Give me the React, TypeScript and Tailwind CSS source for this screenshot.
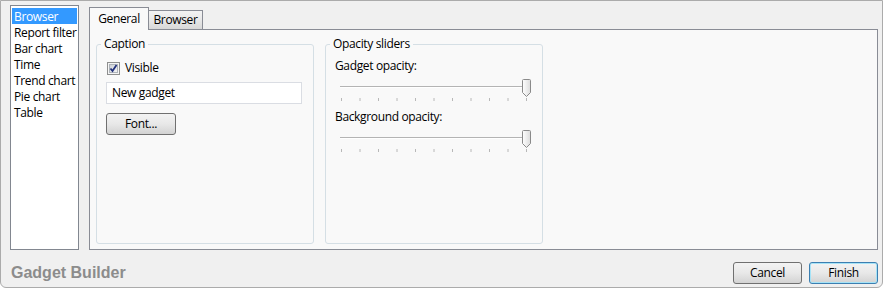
import React from "react";

const ticks = [0, 1, 2, 3, 4, 5, 6, 7, 8, 9, 10];

function Slider() {
  return (
    <div className="relative w-[197px] h-[28px]">
      <div className="absolute left-[5px] top-[12px] w-[188px] h-[2px] border-t border-[#b4b4b4] bg-white" />
      <svg className="absolute left-0 top-[24px]" width="197" height="4">
        {ticks.map((i) => (
          <line key={i} x1={6.5 + i * 18.5} x2={6.5 + i * 18.5} y1="0" y2="3" stroke="#b8b8b8" strokeWidth="1" />
        ))}
      </svg>
      <svg className="absolute left-[186px] top-[5px]" width="11" height="19" viewBox="0 0 11 19">
        <defs>
          <linearGradient id="thumbg" x1="0" y1="0" x2="1" y2="0">
            <stop offset="0" stopColor="#ffffff" />
            <stop offset="1" stopColor="#dcdcdc" />
          </linearGradient>
        </defs>
        <path d="M1.5 1.5 Q1.5 0.5 2.5 0.5 H8.5 Q9.5 0.5 9.5 1.5 V13.5 L5.5 17.5 L1.5 13.5 Z" fill="url(#thumbg)" stroke="#8a8a8a" strokeWidth="1" />
      </svg>
    </div>
  );
}

export default function App() {
  const items = ["Browser", "Report filter", "Bar chart", "Time", "Trend chart", "Pie chart", "Table"];
  return (
    <div
      className="w-[885px] h-[290px] bg-white text-[12px] tracking-[-0.35px] text-black"
      style={{ fontFamily: '"Open Sans", "Noto Sans", sans-serif' }}
    >
      <div className="w-[883px] h-[288px] bg-[#f0f0f0] border border-[#ababab] rounded-b-[6px] flex flex-col pl-[9px] pr-[4px] pt-[4px]">
        <div className="flex h-[245px]">
          <div className="w-[69px] h-full bg-white border border-[#828790] p-px pt-[2px] flex flex-col">
            {items.map((it, i) => (
              <div
                key={it}
                className={
                  "h-[16px] leading-[17px] pl-[2px] whitespace-nowrap " +
                  (i === 0 ? "bg-[#3399ff] text-white" : "")
                }
              >
                {it}
              </div>
            ))}
          </div>
          <div className="ml-[10px] flex-1 flex flex-col">
            <div className="h-[24px] flex items-end">
              <div className="relative z-10 -mb-px w-[60px] h-[23px] bg-[#f9f9f9] border border-b-0 border-[#898c95] flex items-center justify-center pb-[1px]">
                General
              </div>
              <div className="-ml-px w-[55px] h-[19px] bg-linear-to-b from-[#f3f3f3] via-[#e8e8e8] to-[#d8d8d8] border border-b-0 border-[#898c95] flex items-center justify-center">
                Browser
              </div>
            </div>
            <div className="flex-1 bg-[#f9f9f9] border border-[#898c95] pl-[6px] pt-[6px] flex items-start gap-[11px]">
              <fieldset className="w-[218px] h-[208px] border border-[#d5dfe5] rounded-[3px] px-[9px]">
                <legend className="-ml-[5px] px-[3px] h-[16px] leading-[16px]">Caption</legend>
                <div className="mt-[8px] h-[16px] flex items-center">
                  <svg width="13" height="13" viewBox="0 0 13 13" className="ml-px">
                    <defs>
                      <linearGradient id="cbg" x1="0" y1="0" x2="1" y2="1">
                        <stop offset="0" stopColor="#cbcfd5" />
                        <stop offset="1" stopColor="#f6f6f6" />
                      </linearGradient>
                    </defs>
                    <rect x="0.5" y="0.5" width="12" height="12" fill="#f4f4f4" stroke="#8e8f8f" />
                    <rect x="2.5" y="2.5" width="8" height="8" fill="url(#cbg)" stroke="#aeb3b9" />
                    <path d="M3.5 6.5 L5.5 9 L9.5 3" fill="none" stroke="#21307c" strokeWidth="1.8" />
                  </svg>
                  <span className="ml-[5px]">Visible</span>
                </div>
                <div className="mt-[6px] w-[196px] h-[22px] bg-white border border-[#dadde3] pl-[5px] flex items-center">
                  New gadget
                </div>
                <button className="mt-[9px] w-[70px] h-[22px] rounded-[3px] border border-[#707070] bg-linear-to-b from-[#f3f3f3] via-[#e8e8e8] to-[#d3d3d3] flex items-center justify-center">
                  Font...
                </button>
              </fieldset>
              <fieldset className="w-[218px] h-[208px] border border-[#d5dfe5] rounded-[3px] pl-[9px]">
                <legend className="-ml-[5px] px-[3px] h-[16px] leading-[16px]">Opacity sliders</legend>
                <div className="mt-[6px] h-[16px] leading-[16px]">Gadget opacity:</div>
                <Slider />
                <div className="mt-[7px] h-[16px] leading-[16px]">Background opacity:</div>
                <Slider />
              </fieldset>
            </div>
          </div>
        </div>
        <div className="flex-1 flex items-start pt-[12px]">
          <div
            className="pl-px h-[22px] flex items-center text-[16px] tracking-normal font-bold text-[#8c8c8c]"
            style={{ fontFamily: '"Liberation Sans", Arial, sans-serif' }}
          >
            Gadget Builder
          </div>
          <div className="ml-auto flex gap-[7px]">
            <button className="w-[69px] h-[22px] rounded-[3px] border border-[#707070] bg-linear-to-b from-[#f3f3f3] via-[#e8e8e8] to-[#d3d3d3] flex items-center justify-center">
              Cancel
            </button>
            <button className="w-[69px] h-[22px] rounded-[3px] border border-[#3c7fb1] bg-linear-to-b from-[#f3f3f3] via-[#e8e8e8] to-[#d3d3d3] flex items-center justify-center shadow-[inset_0_0_0_1px_#a6e3f7]">
              Finish
            </button>
          </div>
        </div>
      </div>
    </div>
  );
}
